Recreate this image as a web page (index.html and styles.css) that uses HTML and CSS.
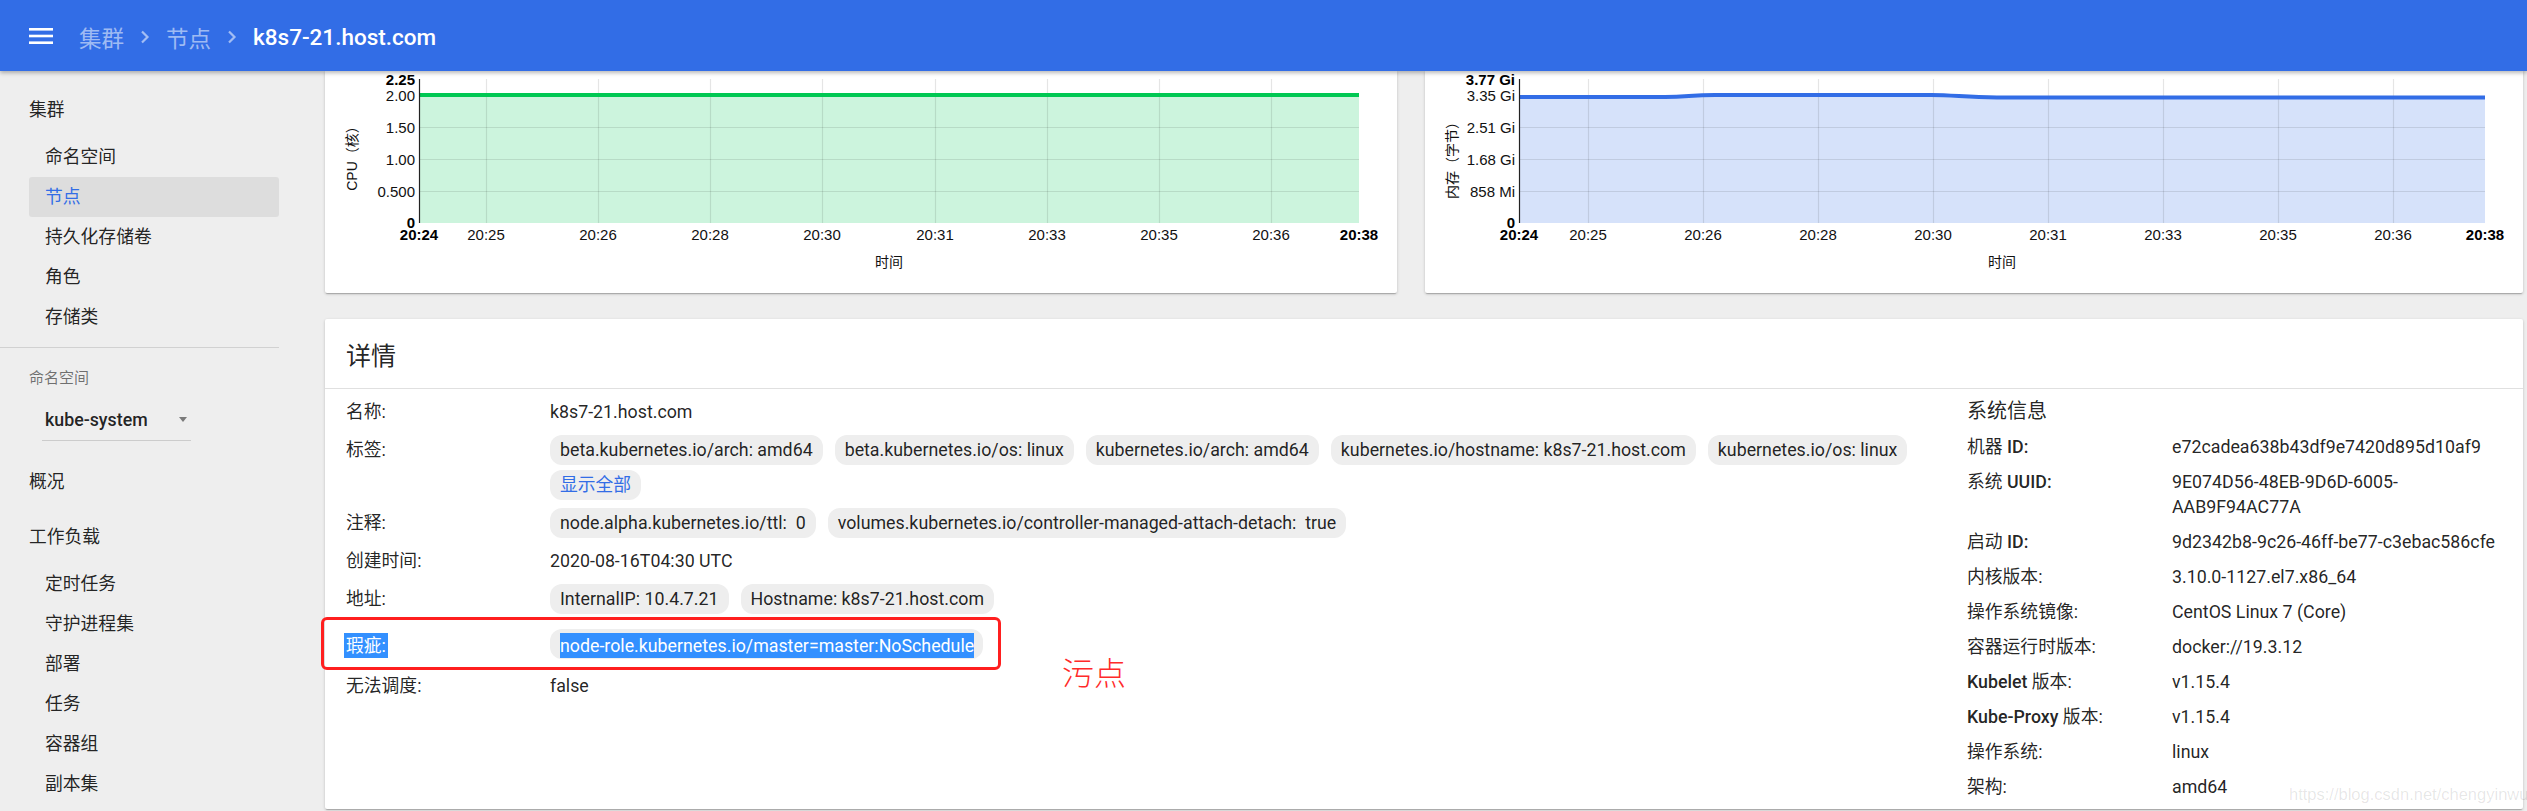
FILE: index.html
```html
<!DOCTYPE html>
<html lang="zh-CN">
<head>
<meta charset="utf-8">
<title>k8s7-21.host.com - 节点</title>
<link rel="stylesheet" href="styles.css">
</head>
<body>
<header class="topbar">
  <svg class="menu" viewBox="0 0 24 16" width="24" height="16" aria-hidden="true">
    <rect x="0" y="0" width="24" height="2.6" fill="#fff"/>
    <rect x="0" y="6.7" width="24" height="2.6" fill="#fff"/>
    <rect x="0" y="13.4" width="24" height="2.6" fill="#fff"/>
  </svg>
  <nav class="crumbs">
    <span class="crumb">集群</span>
    <svg class="chev" viewBox="0 0 10 14" width="10" height="14" aria-hidden="true"><path d="M2 1.5 L7.5 7 L2 12.5" fill="none" stroke="currentColor" stroke-width="2.2"/></svg>
    <span class="crumb">节点</span>
    <svg class="chev" viewBox="0 0 10 14" width="10" height="14" aria-hidden="true"><path d="M2 1.5 L7.5 7 L2 12.5" fill="none" stroke="currentColor" stroke-width="2.2"/></svg>
    <span class="crumb crumb-current">k8s7-21.host.com</span>
  </nav>
</header>

<div class="layout">
  <aside class="sidebar">
    <div class="nav-head">集群</div>
    <ul class="nav-sub">
      <li>命名空间</li>
      <li class="active">节点</li>
      <li>持久化存储卷</li>
      <li>角色</li>
      <li>存储类</li>
    </ul>
    <div class="nav-divider"></div>
    <div class="ns-label">命名空间</div>
    <div class="ns-select"><span>kube-system</span><i class="caret"></i></div>
    <div class="nav-head nav-overview">概况</div>
    <div class="nav-head nav-workloads">工作负载</div>
    <ul class="nav-sub">
      <li>定时任务</li>
      <li>守护进程集</li>
      <li>部署</li>
      <li>任务</li>
      <li>容器组</li>
      <li>副本集</li>
    </ul>
  </aside>

  <main class="main">
    <div class="charts">
      <section class="card chart-card">
        <svg class="chart" viewBox="0 0 1072 222" width="1072" height="222">
          <rect x="94" y="24" width="940" height="128" fill="#00c853" fill-opacity="0.2"/>
          <g stroke="#000" stroke-opacity="0.1" stroke-width="1.2">
            <path d="M161.5 8V152M273.5 8V152M385.5 8V152M497.5 8V152M610.5 8V152M722.5 8V152M834.5 8V152M946.5 8V152"/>
            <path d="M94 56.5H1034M94 88.5H1034M94 120.5H1034"/>
          </g>
          <path d="M94 24H1034" stroke="#00c853" stroke-width="4"/>
          <path d="M94.5 8V152" stroke="#222" stroke-width="1.2"/>
          <g class="tick-y">
            <text x="90" y="8" class="b">2.25</text>
            <text x="90" y="24">2.00</text>
            <text x="90" y="56">1.50</text>
            <text x="90" y="88">1.00</text>
            <text x="90" y="120">0.500</text>
            <text x="90" y="151" class="b">0</text>
          </g>
          <g class="tick-x">
            <text x="94" y="163" class="b">20:24</text>
            <text x="161" y="163">20:25</text>
            <text x="273" y="163">20:26</text>
            <text x="385" y="163">20:28</text>
            <text x="497" y="163">20:30</text>
            <text x="610" y="163">20:31</text>
            <text x="722" y="163">20:33</text>
            <text x="834" y="163">20:35</text>
            <text x="946" y="163">20:36</text>
            <text x="1034" y="163" class="b">20:38</text>
          </g>
          <text class="axis-title" transform="translate(27 84) rotate(-90)">CPU（核）</text>
          <text class="axis-title" x="564" y="191">时间</text>
        </svg>
      </section>
      <section class="card chart-card">
        <svg class="chart" viewBox="0 0 1098 222" width="1098" height="222">
          <path d="M94 26 L240 26 C262 26 266 24 290 24 L506 24 C530 24 540 26.5 572 26.5 L1060 26.5 L1060 152 L94 152 Z" fill="#326de6" fill-opacity="0.2"/>
          <g stroke="#000" stroke-opacity="0.1" stroke-width="1.2">
            <path d="M163.5 8V152M278.5 8V152M393.5 8V152M508.5 8V152M623.5 8V152M738.5 8V152M853.5 8V152M968.5 8V152"/>
            <path d="M94 56.5H1060M94 88.5H1060M94 120.5H1060"/>
          </g>
          <path d="M94 26 L240 26 C262 26 266 24 290 24 L506 24 C530 24 540 26.5 572 26.5 L1060 26.5" fill="none" stroke="#326de6" stroke-width="4"/>
          <path d="M94.5 8V152" stroke="#222" stroke-width="1.2"/>
          <g class="tick-y">
            <text x="90" y="8" class="b">3.77 Gi</text>
            <text x="90" y="24">3.35 Gi</text>
            <text x="90" y="56">2.51 Gi</text>
            <text x="90" y="88">1.68 Gi</text>
            <text x="90" y="120">858 Mi</text>
            <text x="90" y="151" class="b">0</text>
          </g>
          <g class="tick-x">
            <text x="94" y="163" class="b">20:24</text>
            <text x="163" y="163">20:25</text>
            <text x="278" y="163">20:26</text>
            <text x="393" y="163">20:28</text>
            <text x="508" y="163">20:30</text>
            <text x="623" y="163">20:31</text>
            <text x="738" y="163">20:33</text>
            <text x="853" y="163">20:35</text>
            <text x="968" y="163">20:36</text>
            <text x="1060" y="163" class="b">20:38</text>
          </g>
          <text class="axis-title" transform="translate(27 86) rotate(-90)">内存（字节）</text>
          <text class="axis-title" x="577" y="191">时间</text>
        </svg>
      </section>
    </div>

    <section class="card details">
      <header class="details-head">详情</header>
      <div class="details-body">
        <div class="details-main">
          <div class="row">
            <div class="label">名称:</div>
            <div class="value">k8s7-21.host.com</div>
          </div>
          <div class="row">
            <div class="label">标签:</div>
            <div class="value">
              <div class="chips">
                <span class="chip">beta.kubernetes.io/arch: amd64</span>
                <span class="chip">beta.kubernetes.io/os: linux</span>
                <span class="chip">kubernetes.io/arch: amd64</span>
                <span class="chip">kubernetes.io/hostname: k8s7-21.host.com</span>
                <span class="chip">kubernetes.io/os: linux</span>
              </div>
              <div class="chips chips-more"><span class="chip chip-link">显示全部</span></div>
            </div>
          </div>
          <div class="row">
            <div class="label">注释:</div>
            <div class="value">
              <div class="chips">
                <span class="chip">node.alpha.kubernetes.io/ttl:&nbsp; 0</span>
                <span class="chip">volumes.kubernetes.io/controller-managed-attach-detach:&nbsp; true</span>
              </div>
            </div>
          </div>
          <div class="row">
            <div class="label">创建时间:</div>
            <div class="value">2020-08-16T04:30 UTC</div>
          </div>
          <div class="row">
            <div class="label">地址:</div>
            <div class="value">
              <div class="chips">
                <span class="chip">InternalIP: 10.4.7.21</span>
                <span class="chip">Hostname: k8s7-21.host.com</span>
              </div>
            </div>
          </div>
          <div class="row row-taint">
            <div class="label"><span class="selected selected-label">瑕疵:</span></div>
            <div class="value">
              <div class="chips">
                <span class="chip chip-selected"><span class="selected">node-role.kubernetes.io/master=master:NoSchedule</span></span>
              </div>
            </div>
          </div>
          <div class="row">
            <div class="label">无法调度:</div>
            <div class="value">false</div>
          </div>
        </div>

        <div class="sysinfo">
          <div class="sys-title">系统信息</div>
          <div class="sys-row"><div class="sys-label">机器 <b>ID:</b></div><div class="sys-value">e72cadea638b43df9e7420d895d10af9</div></div>
          <div class="sys-row"><div class="sys-label">系统 <b>UUID:</b></div><div class="sys-value">9E074D56-48EB-9D6D-6005-AAB9F94AC77A</div></div>
          <div class="sys-row"><div class="sys-label">启动 <b>ID:</b></div><div class="sys-value">9d2342b8-9c26-46ff-be77-c3ebac586cfe</div></div>
          <div class="sys-row"><div class="sys-label">内核版本:</div><div class="sys-value">3.10.0-1127.el7.x86_64</div></div>
          <div class="sys-row"><div class="sys-label">操作系统镜像:</div><div class="sys-value">CentOS Linux 7 (Core)</div></div>
          <div class="sys-row"><div class="sys-label">容器运行时版本:</div><div class="sys-value">docker://19.3.12</div></div>
          <div class="sys-row"><div class="sys-label"><b>Kubelet</b> 版本:</div><div class="sys-value">v1.15.4</div></div>
          <div class="sys-row"><div class="sys-label"><b>Kube-Proxy</b> 版本:</div><div class="sys-value">v1.15.4</div></div>
          <div class="sys-row"><div class="sys-label">操作系统:</div><div class="sys-value">linux</div></div>
          <div class="sys-row"><div class="sys-label">架构:</div><div class="sys-value">amd64</div></div>
        </div>
      </div>
    </section>
  </main>
</div>

<div class="annot-box"></div>
<div class="annot-text">污点</div>
<div class="watermark">https://blog.csdn.net/chengyinwu</div>
</body>
</html>
```

FILE: styles.css
```css
html, body {
  margin: 0;
  padding: 0;
}

body {
  width: 2527px;
  height: 811px;
  overflow: hidden;
  position: relative;
  background: #eeeeee;
  font-family: Roboto, "Noto Sans CJK SC", sans-serif;
  font-size: 17.8px;
  color: rgba(0, 0, 0, 0.87);
}

/* ---------- top bar ---------- */
.topbar {
  position: relative;
  z-index: 2;
  height: 71px;
  box-sizing: border-box;
  padding-left: 29px;
  display: flex;
  align-items: center;
  background: #326de6;
  color: #fff;
  box-shadow: 0 2px 4px rgba(0, 0, 0, 0.28);
}

.menu {
  flex: none;
  margin-right: 26px;
  margin-top: 1px;
}

.crumbs {
  display: flex;
  align-items: center;
  font-size: 22.5px;
  margin-top: 3px;
}

.crumb {
  color: rgba(255, 255, 255, 0.55);
}

.crumb-current {
  color: #fff;
  font-weight: 500;
}

.chev {
  color: rgba(255, 255, 255, 0.55);
  margin: 0 16px 0 16px;
}

/* ---------- layout ---------- */
.layout {
  display: flex;
  height: 740px;
}

.sidebar {
  width: 300px;
  flex: none;
  box-sizing: border-box;
  padding-top: 19px;
}

.nav-head {
  height: 40px;
  line-height: 40px;
  padding-left: 29px;
  margin-bottom: 6.5px;
}

.nav-overview {
  margin-top: 21px;
  margin-bottom: 0;
}

.nav-workloads {
  margin-top: 15px;
  margin-bottom: 7px;
}

.nav-sub {
  list-style: none;
  margin: 0;
  padding: 0;
}

.nav-sub li {
  width: 250px;
  height: 40px;
  line-height: 40px;
  margin-left: 29px;
  padding-left: 16px;
  box-sizing: border-box;
  border-radius: 3px;
}

.nav-sub li.active {
  background: #dddddd;
  color: #326de6;
}

.nav-divider {
  width: 279px;
  height: 1px;
  margin-top: 10px;
  background: rgba(0, 0, 0, 0.12);
}

.ns-label {
  margin-top: 20px;
  padding-left: 29px;
  font-size: 15px;
  line-height: 20px;
  color: rgba(0, 0, 0, 0.54);
}

.ns-select {
  width: 149px;
  margin-left: 42px;
  box-sizing: border-box;
  padding: 19px 4px 7px 3px;
  line-height: 26px;
  display: flex;
  align-items: center;
  font-weight: 500;
  border-bottom: 1px solid rgba(0, 0, 0, 0.14);
}

.caret {
  margin-left: auto;
  width: 0;
  height: 0;
  border-left: 4.5px solid transparent;
  border-right: 4.5px solid transparent;
  border-top: 5px solid #7a7a7a;
}

/* ---------- main ---------- */
.main {
  flex: 1;
  min-width: 0;
  padding: 0 4px 0 25px;
  display: flex;
  flex-direction: column;
}

.card {
  background: #fff;
  border-radius: 2px;
  box-shadow: 0 1px 3px rgba(0, 0, 0, 0.22), 0 2px 1px -1px rgba(0, 0, 0, 0.18);
}

.charts {
  display: grid;
  grid-template-columns: 1072px 1098px;
  column-gap: 28px;
  height: 222px;
}

.chart-card {
  height: 222px;
  border-top-left-radius: 0;
  border-top-right-radius: 0;
}

.chart {
  display: block;
  font-family: "Liberation Sans", Arial, "Noto Sans CJK SC", sans-serif;
}

.tick-y text {
  font-size: 15px;
  fill: #111;
  text-anchor: end;
  dominant-baseline: central;
}

.tick-x text {
  font-size: 15px;
  fill: #111;
  text-anchor: middle;
  dominant-baseline: central;
}

.chart .b {
  font-weight: 700;
  fill: #000;
}

.axis-title {
  font-size: 14px;
  fill: #111;
  text-anchor: middle;
  dominant-baseline: central;
}

/* ---------- details ---------- */
.details {
  margin-top: 26px;
  height: 490px;
  box-sizing: border-box;
}

.details-head {
  height: 70px;
  box-sizing: border-box;
  padding-left: 21px;
  display: flex;
  align-items: center;
  font-size: 25px;
  border-bottom: 1px solid #e0e0e0;
}

.details-body {
  display: flex;
  padding: 8px 21px 0 21px;
}

.details-main {
  flex: 1;
  min-width: 0;
}

.row {
  display: grid;
  grid-template-columns: 204px 1fr;
  line-height: 30px;
}

.row + .row {
  margin-top: 8px;
}

.row-taint {
  padding: 7px 0 4px;
}

.chips {
  display: flex;
  flex-wrap: wrap;
  gap: 5px 12px;
}

.chips-more {
  margin-top: 5px;
}

.chip {
  height: 30px;
  line-height: 30px;
  padding: 0 10px;
  border-radius: 12px;
  background: #eeeeee;
  white-space: nowrap;
}

.chip-link {
  color: #326de6;
}

.chip-selected {
  padding-right: 9px;
}

.selected {
  display: inline-block;
  line-height: 25px;
  background: #3390ff;
  color: #fff;
  vertical-align: middle;
}

.selected-label {
  margin-left: -2px;
  padding: 0 2px;
}

.sysinfo {
  width: 535px;
  flex: none;
  padding-top: 2px;
}

.sys-title {
  font-size: 20px;
  line-height: 25px;
  margin-bottom: 1px;
}

.sys-row {
  display: grid;
  grid-template-columns: 205px 330px;
  line-height: 25px;
  margin-top: 10px;
}

.sys-label b {
  font-weight: 500;
}

.sys-value {
  overflow-wrap: break-word;
}

/* ---------- annotation overlays ---------- */
.annot-box {
  position: absolute;
  left: 321px;
  top: 617px;
  width: 680px;
  height: 53px;
  box-sizing: border-box;
  border: 3px solid #ff1f1f;
  border-radius: 6px;
}

.annot-text {
  position: absolute;
  left: 1062px;
  top: 654px;
  line-height: 40px;
  font-size: 32px;
  font-weight: 300;
  color: #ff2a2a;
}

.watermark {
  position: absolute;
  left: 2289px;
  top: 784px;
  font-family: "Liberation Sans", Arial, sans-serif;
  font-size: 16.5px;
  line-height: 20px;
  color: rgba(0, 0, 0, 0.1);
}
```
